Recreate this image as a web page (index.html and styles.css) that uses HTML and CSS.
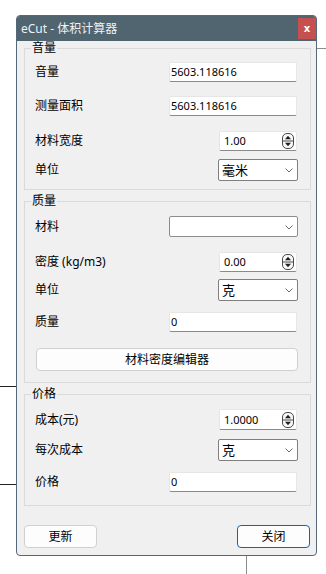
FILE: index.html
```html
<!DOCTYPE html>
<html lang="zh">
<head>
<meta charset="utf-8">
<title>eCut - 体积计算器</title>
<link rel="stylesheet" href="styles.css">
</head>
<body>
<div class="deco deco-tr"></div>
<div class="deco deco-l1"></div>
<div class="deco deco-l2"></div>
<div class="deco deco-b"></div>
<div class="window">
  <div class="titlebar">
    <span class="title">eCut - 体积计算器</span>
    <div class="close">x</div>
  </div>
  <div class="content">
    <fieldset class="group g1">
      <legend>音量</legend>
      <div class="row r1"><span class="label">音量</span><div class="field">5603.118616</div></div>
      <div class="row r2"><span class="label">测量面积</span><div class="field">5603.118616</div></div>
      <div class="row r3"><span class="label">材料宽度</span><div class="spin"><span>1.00</span><svg class="spin-ico" width="12" height="16" viewBox="0 0 12 16"><rect x="0.5" y="0.5" width="11" height="15" rx="4.5" fill="#f7f7f7" stroke="#4a4a4a"/><line x1="0.5" y1="8" x2="11.5" y2="8" stroke="#4a4a4a"/><path d="M3 6.2 L6 2.8 L9 6.2 Z" fill="#1e1e1e"/><path d="M3 9.8 L6 13.2 L9 9.8 Z" fill="#1e1e1e"/></svg></div></div>
      <div class="row r4"><span class="label">单位</span><div class="combo"><span>毫米</span><svg class="chev" width="8" height="5" viewBox="0 0 8 5"><path d="M0.5 0.5 L4 4 L7.5 0.5" fill="none" stroke="#6b6b6b"/></svg></div></div>
    </fieldset>
    <fieldset class="group g2">
      <legend>质量</legend>
      <div class="row r5"><span class="label">材料</span><div class="combo wide"><span></span><svg class="chev" width="8" height="5" viewBox="0 0 8 5"><path d="M0.5 0.5 L4 4 L7.5 0.5" fill="none" stroke="#6b6b6b"/></svg></div></div>
      <div class="row r6"><span class="label">密度 (kg/m3)</span><div class="spin"><span>0.00</span><svg class="spin-ico" width="12" height="16" viewBox="0 0 12 16"><rect x="0.5" y="0.5" width="11" height="15" rx="4.5" fill="#f7f7f7" stroke="#4a4a4a"/><line x1="0.5" y1="8" x2="11.5" y2="8" stroke="#4a4a4a"/><path d="M3 6.2 L6 2.8 L9 6.2 Z" fill="#1e1e1e"/><path d="M3 9.8 L6 13.2 L9 9.8 Z" fill="#1e1e1e"/></svg></div></div>
      <div class="row r7"><span class="label">单位</span><div class="combo"><span>克</span><svg class="chev" width="8" height="5" viewBox="0 0 8 5"><path d="M0.5 0.5 L4 4 L7.5 0.5" fill="none" stroke="#6b6b6b"/></svg></div></div>
      <div class="row r8"><span class="label">质量</span><div class="field">0</div></div>
      <div class="row r9"><div class="btn wide-btn">材料密度编辑器</div></div>
    </fieldset>
    <fieldset class="group g3">
      <legend>价格</legend>
      <div class="row r10"><span class="label">成本(元)</span><div class="spin"><span>1.0000</span><svg class="spin-ico" width="12" height="16" viewBox="0 0 12 16"><rect x="0.5" y="0.5" width="11" height="15" rx="4.5" fill="#f7f7f7" stroke="#4a4a4a"/><line x1="0.5" y1="8" x2="11.5" y2="8" stroke="#4a4a4a"/><path d="M3 6.2 L6 2.8 L9 6.2 Z" fill="#1e1e1e"/><path d="M3 9.8 L6 13.2 L9 9.8 Z" fill="#1e1e1e"/></svg></div></div>
      <div class="row r11"><span class="label">每次成本</span><div class="combo"><span>克</span><svg class="chev" width="8" height="5" viewBox="0 0 8 5"><path d="M0.5 0.5 L4 4 L7.5 0.5" fill="none" stroke="#6b6b6b"/></svg></div></div>
      <div class="row r12"><span class="label">价格</span><div class="field">0</div></div>
    </fieldset>
    <div class="footer">
      <div class="btn">更新</div>
      <div class="btn primary">关闭</div>
    </div>
  </div>
</div>
</body>
</html>
```
FILE: styles.css
```css
* { box-sizing: border-box; }
html, body { margin: 0; padding: 0; background: #ffffff; }
body {
  width: 326px;
  height: 574px;
  position: relative;
  overflow: hidden;
  padding: 15px 0 0 16px;
  font-family: "Noto Sans", "Noto Sans CJK SC", sans-serif;
  font-size: 12px;
  color: #000;
}
.deco { position: absolute; }
.deco-tr { left: 317px; top: 48px; width: 9px; height: 1px; background: #8c8c8c; }
.deco-l1 { left: 0; top: 386px; width: 16px; height: 1px; background: #222; }
.deco-l2 { left: 0; top: 484px; width: 16px; height: 1px; background: #222; }
.deco-b { left: 246px; top: 556px; width: 1px; height: 18px; background: #8c8c8c; }

.window {
  width: 301px;
  height: 541px;
  border: 1px solid #55687a;
  border-radius: 4px;
  background: #f0f0f0;
  display: flex;
  flex-direction: column;
  overflow: hidden;
}
.titlebar {
  height: 25px;
  flex: none;
  background: #516570;
  display: flex;
  align-items: center;
  padding-left: 4px;
}
.title {
  color: #eef2f4;
  font-size: 12px;
  line-height: 14px;
  font-family: "Noto Sans", "Noto Sans CJK SC", sans-serif;
}
.close {
  margin-left: auto;
  align-self: flex-start;
  margin-top: 2px;
  width: 18px;
  height: 21px;
  background: #c64f4f;
  color: #fff;
  font-family: "DejaVu Sans", sans-serif;
  font-weight: bold;
  font-size: 10px;
  display: flex;
  align-items: center;
  justify-content: center;
  padding-bottom: 1px;
}
.content {
  flex: 1;
  display: flex;
  flex-direction: column;
  padding: 0 5px 7px 7px;
}
.group {
  margin: 0;
  padding: 0;
  border: 1px solid #dadada;
  min-width: 0;
}
.group legend {
  margin-left: 6px;
  padding: 0 1px;
  font-size: 12px;
  line-height: 14px;
  height: 14px;
}
.g2, .g3 { margin-top: 4px; }
.g1 { padding-bottom: 8px; }
.g2 { padding-bottom: 11px; }
.g3 { padding-bottom: 13px; }

.row {
  display: flex;
  align-items: center;
  justify-content: space-between;
  padding: 0 12px 0 10px;
}
.label { font-size: 12px; line-height: 14px; white-space: nowrap; }
.r1 { margin-top: 7px; }
.r2 { margin-top: 14px; }
.r3 { margin-top: 15px; }
.r4 { margin-top: 8px; }
.r5 { margin-top: 8px; }
.r6 { margin-top: 15px; }
.r7 { margin-top: 7px; }
.r8 { margin-top: 11px; }
.r9 { margin-top: 16px; }
.r10 { margin-top: 8px; }
.r11 { margin-top: 9px; }
.r12 { margin-top: 11px; }

.field {
  width: 128px;
  height: 20px;
  margin-right: 1px;
  background: #fff;
  border: 1px solid #e6e6e6;
  border-bottom-color: #8a8a8a;
  border-radius: 2px;
  padding: 0 1px;
  font-size: 11px;
  line-height: 18px;
  font-family: "Noto Sans", "Noto Sans CJK SC", sans-serif;
}
.spin {
  width: 78px;
  height: 20px;
  margin-right: 1px;
  background: #fff;
  border: 1px solid #e6e6e6;
  border-bottom-color: #8a8a8a;
  border-radius: 2px;
  padding: 0 2px 0 4px;
  display: flex;
  align-items: center;
  justify-content: space-between;
  font-size: 11px;
  line-height: 18px;
}
.r10 .spin { height: 21px; }
.spin-ico { display: block; }
.combo {
  width: 80px;
  height: 22px;
  background: #fff;
  border: 1px solid #7f7f7f;
  border-radius: 2px;
  padding: 0 4px 0 3px;
  display: flex;
  align-items: center;
  justify-content: space-between;
  font-size: 13px;
  line-height: 16px;
}
.combo.wide { width: 129px; height: 21px; border-color: #8c8c8c; }
.chev { display: block; margin-top: 1px; }

.btn {
  height: 23px;
  width: 73px;
  background: #fdfdfd;
  border: 1px solid #d0d0d0;
  border-radius: 4px;
  display: flex;
  align-items: center;
  justify-content: center;
  font-size: 12px;
  line-height: 14px;
}
.wide-btn { width: 262px; margin-left: 1px; }
.footer {
  margin-top: auto;
  display: flex;
  justify-content: space-between;
  padding-right: 1px;
}
.btn.primary { border-color: #0a64c2; }
```
